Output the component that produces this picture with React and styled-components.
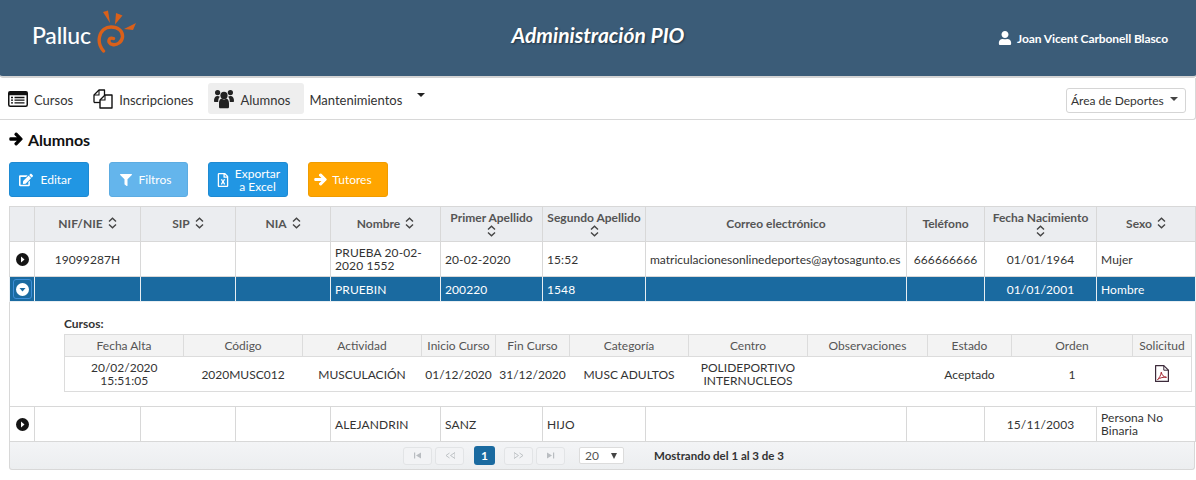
import styled, { createGlobalStyle } from 'styled-components'
import { FaEdit, FaFilter, FaArrowRight, FaUser, FaRegFileExcel } from 'react-icons/fa'

const GlobalStyle = createGlobalStyle`
  html, body {
    margin: 0;
    padding: 0;
    background: #fff;
    font-family: Lato, "Liberation Sans", sans-serif;
    font-size: 12px;
    color: #333;
    overflow: hidden;
  }
`

const Header = styled.header`
  height: 76px;
  background: #3b5c78;
  border-bottom: 2px solid #d4d4d4;
  border-radius: 0 0 3px 3px;
  display: grid;
  grid-template-columns: 1fr auto 1fr;
  align-items: center;
`

const Logo = styled.div`
  display: flex;
  align-items: center;
  padding: 0 0 13px 32px;
`

const LogoText = styled.span`
  font-size: 23px;
  font-weight: 500;
  color: #fff;
  letter-spacing: -0.2px;
  margin-top: 6px;
`

const Title = styled.h1`
  margin: 0 0 8px;
  font-size: 21px;
  font-weight: 700;
  font-style: italic;
  color: #fff;
  text-shadow: 1px 1px 2px rgba(0, 0, 0, 0.45);
`

const UserBox = styled.div`
  display: flex;
  justify-content: flex-end;
  align-items: center;
  gap: 5px;
  padding: 0 28px 0 0;
  font-size: 12px;
  font-weight: 700;
  letter-spacing: -0.1px;
  color: #fff;
`

const Nav = styled.nav`
  height: 42px;
  box-sizing: border-box;
  border-bottom: 1px solid #d8d8d8;
  border-right: 1px solid #d8d8d8;
  border-radius: 0 0 3px 0;
  display: flex;
  align-items: center;
  padding: 0 9px 0 8px;
`

const NavItem = styled.div`
  display: flex;
  align-items: center;
  gap: 6px;
  height: 31px;
  padding: ${(p) => (p.$active ? '0 14px 0 6px' : '0')};
  margin-right: ${(p) => p.$gap}px;
  background: ${(p) => (p.$active ? '#eeeeee' : 'transparent')};
  border-radius: 3px;
  color: #333;
  font-size: 13px;
`

const NavLabel = styled.span`
  margin-top: 3px;
`

const Caret = styled.span`
  width: 0;
  height: 0;
  margin-top: -7px;
  border-left: 4px solid transparent;
  border-right: 4px solid transparent;
  border-top: 4px solid #222;
`

const AreaSelect = styled.div`
  margin-left: auto;
  margin-top: 3px;
  width: 120px;
  height: 25px;
  box-sizing: border-box;
  border: 1px solid #d5d5d5;
  border-radius: 3px;
  display: flex;
  align-items: center;
  justify-content: space-between;
  padding: 0 7px 0 4px;
  font-size: 12px;
  color: #333;
`

const SelectCaret = styled.span`
  width: 0;
  height: 0;
  margin-top: -2px;
  border-left: 4px solid transparent;
  border-right: 4px solid transparent;
  border-top: 4px solid #444;
`

const Main = styled.main`
  padding: 0 1px 0 9px;
`

const PageTitle = styled.h2`
  margin: 0;
  height: 42px;
  padding-bottom: 4px;
  box-sizing: border-box;
  display: flex;
  align-items: center;
  gap: 5px;
  font-size: 16px;
  font-weight: 700;
  letter-spacing: -0.1px;
  color: #111;
`

const Toolbar = styled.div`
  display: flex;
  gap: 20px;
  margin-bottom: 9px;
`

const Button = styled.button`
  width: ${(p) => p.$width || 80}px;
  height: 35px;
  padding: 0 ${(p) => p.$shift || 0}px 0 0;
  border: 1px solid ${(p) => p.$border};
  border-radius: 3px;
  background: ${(p) => p.$bg};
  color: #fff;
  font-family: inherit;
  font-size: 12px;
  display: flex;
  align-items: center;
  justify-content: center;
  gap: ${(p) => p.$gap || 7}px;
`

const ButtonStack = styled.span`
  display: block;
  text-align: center;
  line-height: 13px;
`

const Table = styled.table`
  border-collapse: collapse;
  table-layout: fixed;
  width: 1186px;
  border: 1px solid #d8d8d8;
  font-size: 12px;
`

const HeadCell = styled.th`
  height: 34px;
  padding: 0 2px;
  background: #ebedf0;
  border: 1px solid #d8d8d8;
  color: #555;
  font-weight: 700;
  text-align: center;
  line-height: 14px;
  font-size: 12px;
`

const SortMark = styled.svg`
  width: 9px;
  height: 12px;
  ${(p) => (p.$below ? 'display: block; margin: 0 auto;' : 'display: inline-block; margin-left: 5px; vertical-align: -1px;')}
`

const Row = styled.tr`
  background: ${(p) => (p.$selected ? '#1a6aa0' : '#fff')};
  color: ${(p) => (p.$selected ? '#fff' : '#333')};
`

const Cell = styled.td`
  height: ${(p) => (p.$selected ? 24 : 34)}px;
  padding: 0 4px;
  border: 1px solid ${(p) => (p.$selected ? '#e8eef2' : '#d8d8d8')};
  text-align: ${(p) => (p.$center ? 'center' : 'left')};
  line-height: 13px;
  letter-spacing: ${(p) => (p.$tight ? 0 : '0.1px')};
  font-size: 12px;
  overflow: hidden;
`

const ToggleBox = styled.span`
  display: inline-flex;
  align-items: center;
  justify-content: center;
  width: 17px;
  height: 18px;
  vertical-align: middle;
  border-radius: 2px;
  ${(p) => p.$focus && 'outline: 1px solid #3f8fd8;'}
`

const DetailCell = styled.td`
  height: 104px;
  padding: 0;
  background: #fff;
  border: 1px solid #d8d8d8;
  vertical-align: top;
`

const DetailBody = styled.div`
  padding: 14px 4px 0 54px;
`

const DetailTitle = styled.div`
  font-size: 12px;
  font-weight: 700;
  color: #333;
  margin-bottom: 3px;
`

const SubTable = styled.table`
  border-collapse: collapse;
  table-layout: fixed;
  width: 1127px;
  font-size: 12px;
  border: 1px solid #dcdcdc;
`

const SubHead = styled.th`
  height: 21px;
  padding: 0 2px;
  background: #f3f3f3;
  border: 1px solid #dcdcdc;
  font-weight: 400;
  font-size: 12px;
  color: #555;
  text-align: center;
  white-space: nowrap;
`

const SubCell = styled.td`
  height: 34px;
  padding: 0 2px;
  text-align: center;
  line-height: 13px;
  color: #333;
`

const Pager = styled.div`
  width: 1186px;
  height: 28px;
  box-sizing: border-box;
  background: linear-gradient(#f3f4f6, #eceef0);
  border: 1px solid #d8d8d8;
  border-top: 0;
  border-radius: 0 0 3px 3px;
  display: flex;
  align-items: center;
  padding: 0 0 0 393px;
`

const PageBtn = styled.span`
  width: 29px;
  height: 18px;
  box-sizing: border-box;
  border: 1px solid #e2e4e6;
  border-radius: 3px;
  background: #f2f3f5;
  margin-right: ${(p) => p.$gap || 0}px;
  display: flex;
  align-items: center;
  justify-content: center;
`

const PageCurrent = styled.span`
  width: 21px;
  height: 19px;
  background: #1a6aa0;
  border-radius: 3px;
  margin-right: 9px;
  color: #fff;
  font-size: 12px;
  font-weight: 700;
  display: flex;
  align-items: center;
  justify-content: center;
`

const PerPage = styled.span`
  width: 45px;
  height: 17px;
  box-sizing: border-box;
  background: #fff;
  border: 1px solid #dcdcdc;
  border-radius: 2px;
  margin: 0 30px 0 14px;
  padding: 0 6px 0 5px;
  display: flex;
  align-items: center;
  justify-content: space-between;
  font-size: 12px;
  color: #555;
`

const PerCaret = styled.span`
  width: 0;
  height: 0;
  border-left: 3.5px solid transparent;
  border-right: 3.5px solid transparent;
  border-top: 6px solid #444;
`

const PagerInfo = styled.span`
  font-size: 11.5px;
  font-weight: 700;
  color: #333;
`

const Col = styled.col`
  width: ${(p) => p.$w}px;
`

const LogoMark = styled.svg`
  width: 42px;
  height: 44px;
  margin: -1px 0 0 5px;
`

const Swirl = () => (
  <LogoMark viewBox="96 8 42 44">
    <g fill="#d9601a">
      <polygon points="103,11 108,9.5 110,22" />
      <polygon points="116,12 122.5,14.5 115,23.5" />
      <polygon points="136,22 133,29 124,28" />
    </g>
    <path d="M103.5 50 C100 46 98.5 41 99.5 36 C101 29 106 26 111 26 C118 26 123 30 122.5 36 C122 41 117 44.5 112.5 43.5 C109.5 43 108 40.5 109.5 38 C110.5 37 112 37 113.5 37.5" fill="none" stroke="#d9601a" strokeWidth="3.4" strokeLinecap="round" />
  </LogoMark>
)

const CoursesIcon = () => (
  <svg width="20" height="16" viewBox="0 0 20 16">
    <rect x="0.75" y="0.75" width="18.5" height="14.5" rx="1.5" fill="#fff" stroke="#111" strokeWidth="1.5" />
    <rect x="0.75" y="0.75" width="18.5" height="3.5" fill="#111" />
    <path d="M3 6.5h2M6.5 6.5h10M3 9.2h2M6.5 9.2h10M3 11.9h2M6.5 11.9h10" stroke="#111" strokeWidth="1.3" />
  </svg>
)

const FilesIcon = () => (
  <svg width="20" height="20" viewBox="0 0 20 20">
    <path d="M1 13.5V6L6 1h5.5v5" fill="#fff" stroke="#111" strokeWidth="1.3" strokeLinejoin="round" />
    <path d="M1 6h5V1" fill="none" stroke="#111" strokeWidth="1.1" />
    <path d="M1 13.5h6" stroke="#111" strokeWidth="1.3" />
    <path d="M7 19V11l5-5h7v13z" fill="#fff" stroke="#111" strokeWidth="1.4" strokeLinejoin="round" />
    <path d="M7 11h5V6" fill="none" stroke="#111" strokeWidth="1.1" />
  </svg>
)

const UsersIcon = () => (
  <svg width="20" height="20" viewBox="0 0 20 20" fill="#222">
    <circle cx="3.6" cy="3.6" r="2.6" />
    <circle cx="16.4" cy="3.6" r="2.6" />
    <circle cx="10" cy="6.4" r="3.6" />
    <path d="M0 12c0-3 1-5 3.6-5 1 0 1.6.3 2.2.8C4.8 9 4.2 10.500 4.200 13H1c-.6 0-1-.4-1-1zM20 12c0-3-1-5-3.600-5-1 0-1.600.3-2.200.8 1 1.200 1.600 2.700 1.600 5.200H19c.6 0 1-.4 1-1z" />
    <path d="M5 14.500c0-3.500 1.500-4.700 2.800-4.700.7.500 1.400.8 2.200.8s1.500-.3 2.200-.8c1.300 0 2.800 1.200 2.800 4.700V18c0 .8-.6 1.300-1.300 1.300H6.300C5.600 19.300 5 18.800 5 18z" />
  </svg>
)

const PdfIcon = () => (
  <svg width="14" height="17" viewBox="0 0 14 17">
    <path d="M0.6 0.6h8.200l4.600 4.600v11.200H0.600z" fill="#fff" stroke="#3c2a3a" strokeWidth="1.2" strokeLinejoin="round" />
    <path d="M8.800 0.600v4.600h4.600" fill="none" stroke="#3c2a3a" strokeWidth="1" />
    <path d="M2.500 14.500C4 13.500 6 10 6.300 7.200 6.800 10 8.500 12 11.500 12.300 8.500 11.800 5 12.800 2.500 14.500z" fill="none" stroke="#a3232f" strokeWidth="1" strokeLinejoin="round" />
  </svg>
)

const SortIcon = ({ below }) => (
  <SortMark $below={below} viewBox="0 0 9 12">
    <path d="M1 4.500 L4.500 1.200 L8 4.500 M1 7.500 L4.500 10.800 L8 7.500" fill="none" stroke="#444" strokeWidth="1.4" />
  </SortMark>
)

const Toggle = ({ open }) => (
  <ToggleBox $focus={open}>
    <svg width="13" height="13" viewBox="0 0 13 13">
      <circle cx="6.500" cy="6.500" r="6.500" fill={open ? '#fff' : '#151515'} />
      {open
        ? <polygon points="3.500,5 9.500,5 6.500,8.500" fill="#1a6aa0" />
        : <polygon points="5,3.500 8.500,6.500 5,9.500" fill="#fff" />}
    </svg>
  </ToggleBox>
)

const pagerShapes = {
  first: 'M1 1.500h1.200v6H1zM8 1.500v6L3 4.500z',
  prev: 'M4.500 2L1 4.500 4.500 7M10 1.500v6L5.500 4.500z',
  next: 'M0 1.500v6l4.500-3zM5.500 2L9 4.500 5.500 7',
  last: 'M1 1.500v6l5-3zM7 1.500h1.200v6H7z',
}

const PagerIcon = ({ kind }) => (
  <svg width="10" height="9" viewBox="0 0 10 9">
    <path d={pagerShapes[kind]} fill={kind === 'prev' || kind === 'next' ? 'none' : '#b9bdc1'} stroke="#b9bdc1" strokeWidth={kind === 'prev' || kind === 'next' ? 0.9 : 0} />
  </svg>
)

const columns = [25, 106, 95, 95, 110, 102, 103, 261, 78, 112, 99]

const headers = [
  { label: '' },
  { label: 'NIF/NIE', sort: 'side' },
  { label: 'SIP', sort: 'side' },
  { label: 'NIA', sort: 'side' },
  { label: 'Nombre', sort: 'side' },
  { label: 'Primer Apellido', sort: 'below' },
  { label: 'Segundo Apellido', sort: 'below' },
  { label: 'Correo electrónico' },
  { label: 'Teléfono' },
  { label: 'Fecha Nacimiento', sort: 'below' },
  { label: 'Sexo', sort: 'side' },
]

const subColumns = [119, 119, 119, 74, 74, 119, 119, 120, 84, 121, 59]

const subHeaders = ['Fecha Alta', 'Código', 'Actividad', 'Inicio Curso', 'Fin Curso', 'Categoría', 'Centro', 'Observaciones', 'Estado', 'Orden', 'Solicitud']

const StudentRow = ({ open, data }) => (
  <Row $selected={open}>
    <Cell $selected={open} $center><Toggle open={open} /></Cell>
    <Cell $selected={open} $center>{data.nif}</Cell>
    <Cell $selected={open} />
    <Cell $selected={open} />
    <Cell $selected={open}>{data.name}</Cell>
    <Cell $selected={open}>{data.first}</Cell>
    <Cell $selected={open}>{data.second}</Cell>
    <Cell $selected={open} $tight>{data.mail}</Cell>
    <Cell $selected={open} $center>{data.phone}</Cell>
    <Cell $selected={open} $center>{data.birth}</Cell>
    <Cell $selected={open}>{data.sex}</Cell>
  </Row>
)

const App = () => (
  <>
    <GlobalStyle />
    <Header>
      <Logo>
        <LogoText>Palluc</LogoText>
        <Swirl />
      </Logo>
      <Title>Administración PIO</Title>
      <UserBox><FaUser size={14} />Joan Vicent Carbonell Blasco</UserBox>
    </Header>

    <Nav>
      <NavItem $gap={20}><CoursesIcon /><NavLabel>Cursos</NavLabel></NavItem>
      <NavItem $gap={15}><FilesIcon /><NavLabel>Inscripciones</NavLabel></NavItem>
      <NavItem $active $gap={5}><UsersIcon /><NavLabel>Alumnos</NavLabel></NavItem>
      <NavItem $gap={15}><NavLabel>Mantenimientos</NavLabel></NavItem>
      <Caret />
      <AreaSelect>Área de Deportes<SelectCaret /></AreaSelect>
    </Nav>

    <Main>
      <PageTitle><FaArrowRight size={14} color="#000" stroke="#000" strokeWidth={40} />Alumnos</PageTitle>
      <Toolbar>
        <Button $bg="#2196e3" $border="#1e8ad2" $shift={8} $gap={8}><FaEdit size={14} />Editar</Button>
        <Button $bg="#64b5ec" $border="#5cace2" $width={79} $shift={6}><FaFilter size={12} />Filtros</Button>
        <Button $bg="#2196e3" $border="#1e8ad2" $gap={5}><FaRegFileExcel size={14} /><ButtonStack>Exportar<br />a Excel</ButtonStack></Button>
        <Button $bg="#ffa500" $border="#f09c00" $shift={10} $gap={5}><FaArrowRight size={13} stroke="#fff" strokeWidth={40} />Tutores</Button>
      </Toolbar>

      <Table>
        <colgroup>{columns.map((w, i) => <Col key={i} $w={w} />)}</colgroup>
        <thead>
          <tr>
            {headers.map((h, i) => (
              <HeadCell key={i}>
                {h.label}
                {h.sort && <SortIcon below={h.sort === 'below'} />}
              </HeadCell>
            ))}
          </tr>
        </thead>
        <tbody>
          <StudentRow data={{ nif: '19099287H', name: 'PRUEBA 20-02-2020 1552', first: '20-02-2020', second: '15:52', mail: 'matriculacionesonlinedeportes@aytosagunto.es', phone: '666666666', birth: '01/01/1964', sex: 'Mujer' }} />
          <StudentRow open data={{ name: 'PRUEBIN', first: '200220', second: '1548', birth: '01/01/2001', sex: 'Hombre' }} />
          <tr>
            <DetailCell colSpan={11}>
              <DetailBody>
                <DetailTitle>Cursos:</DetailTitle>
                <SubTable>
                  <colgroup>{subColumns.map((w, i) => <Col key={i} $w={w} />)}</colgroup>
                  <thead>
                    <tr>{subHeaders.map((h) => <SubHead key={h}>{h}</SubHead>)}</tr>
                  </thead>
                  <tbody>
                    <tr>
                      <SubCell>20/02/2020<br />15:51:05</SubCell>
                      <SubCell>2020MUSC012</SubCell>
                      <SubCell>MUSCULACIÓN</SubCell>
                      <SubCell>01/12/2020</SubCell>
                      <SubCell>31/12/2020</SubCell>
                      <SubCell>MUSC ADULTOS</SubCell>
                      <SubCell>POLIDEPORTIVO INTERNUCLEOS</SubCell>
                      <SubCell />
                      <SubCell>Aceptado</SubCell>
                      <SubCell>1</SubCell>
                      <SubCell><PdfIcon /></SubCell>
                    </tr>
                  </tbody>
                </SubTable>
              </DetailBody>
            </DetailCell>
          </tr>
          <StudentRow data={{ name: 'ALEJANDRIN', first: 'SANZ', second: 'HIJO', birth: '15/11/2003', sex: 'Persona No Binaria' }} />
        </tbody>
      </Table>

      <Pager>
        <PageBtn $gap={3}><PagerIcon kind="first" /></PageBtn>
        <PageBtn $gap={10}><PagerIcon kind="prev" /></PageBtn>
        <PageCurrent>1</PageCurrent>
        <PageBtn $gap={3}><PagerIcon kind="next" /></PageBtn>
        <PageBtn><PagerIcon kind="last" /></PageBtn>
        <PerPage>20<PerCaret /></PerPage>
        <PagerInfo>Mostrando del 1 al 3 de 3</PagerInfo>
      </Pager>
    </Main>
  </>
)

export default App
